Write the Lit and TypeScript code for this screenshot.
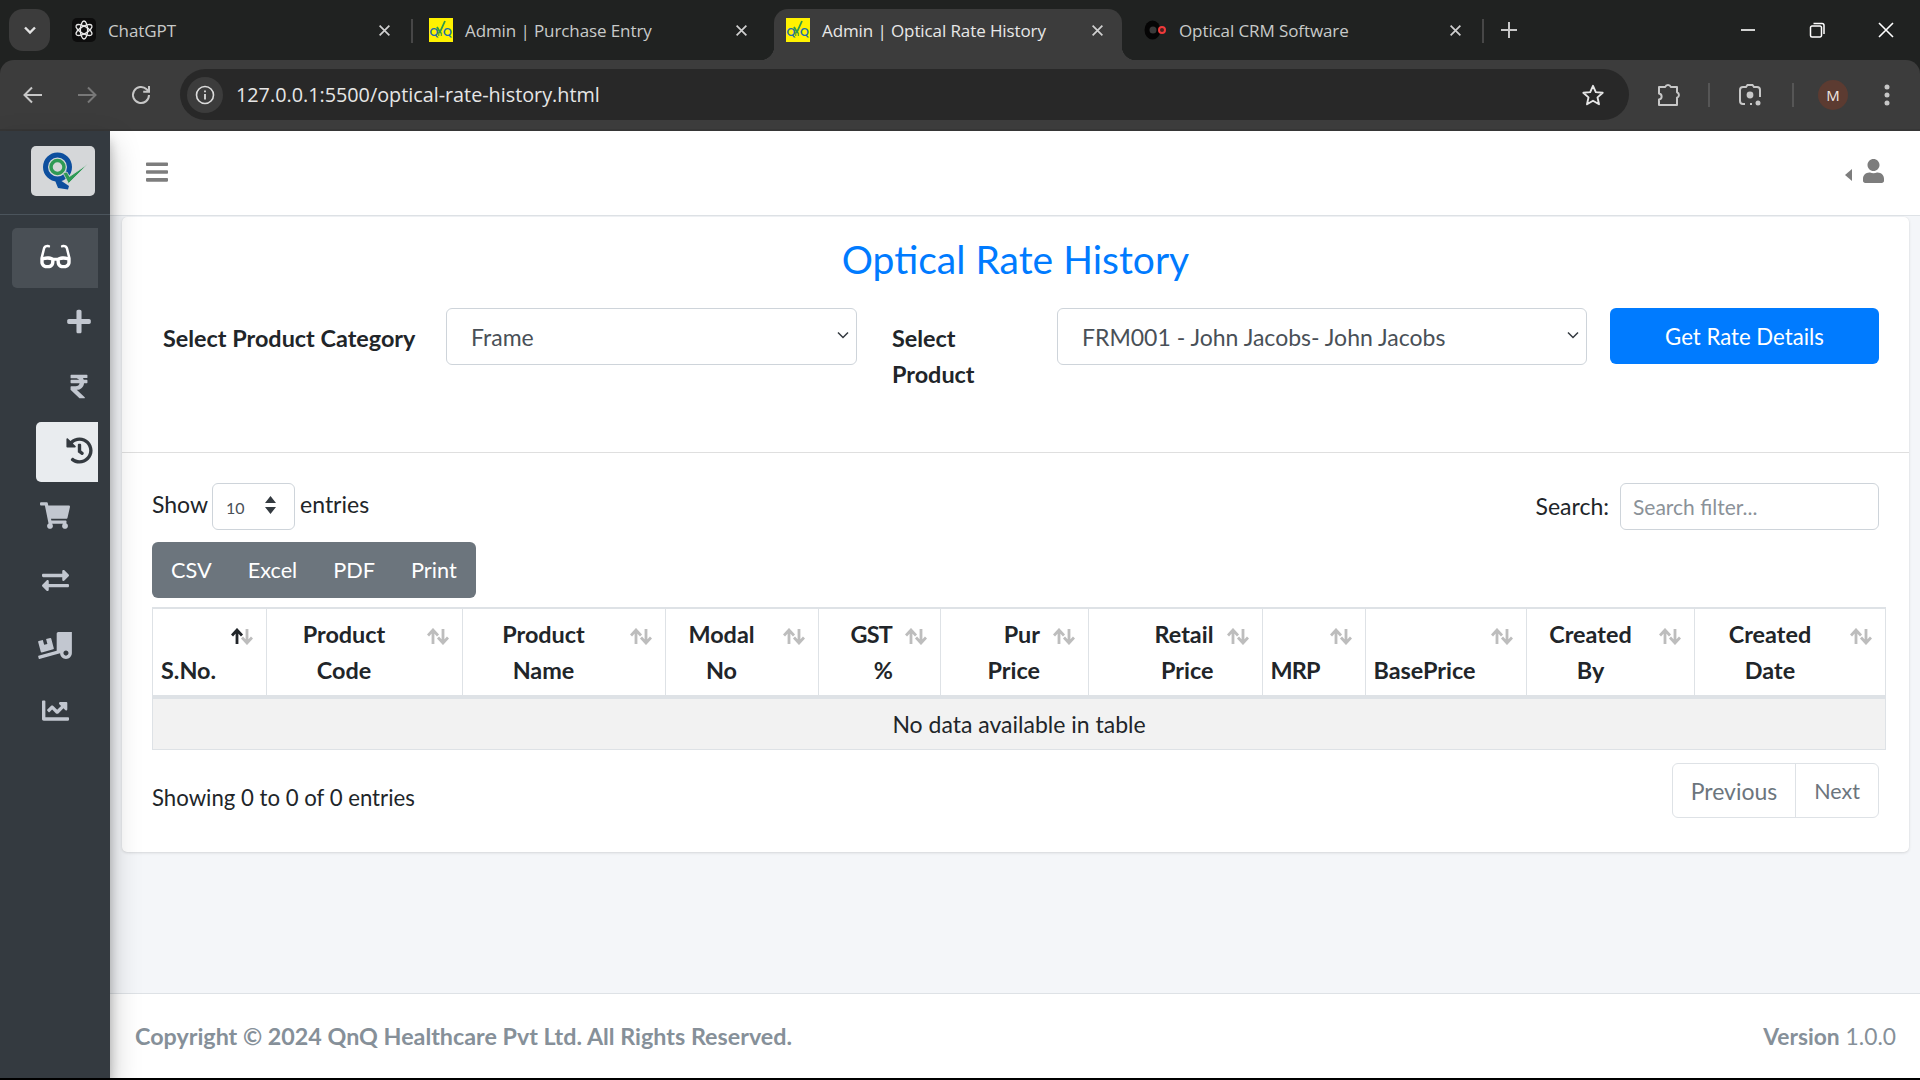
import { LitElement, html, css, svg } from "lit";
import { customElement } from "lit/decorators.js";

const ICONS = {
  bars: ["0 0 448 512", "M16 132h416c8.837 0 16-7.163 16-16V76c0-8.837-7.163-16-16-16H16C7.163 60 0 67.163 0 76v40c0 8.837 7.163 16 16 16zm0 160h416c8.837 0 16-7.163 16-16v-40c0-8.837-7.163-16-16-16H16c-8.837 0-16 7.163-16 16v40c0 8.837 7.163 16 16 16zm0 160h416c8.837 0 16-7.163 16-16v-40c0-8.837-7.163-16-16-16H16c-8.837 0-16 7.163-16 16v40c0 8.837 7.163 16 16 16z"],
  user: ["0 0 448 512", "M224 256c70.7 0 128-57.3 128-128S294.7 0 224 0 96 57.3 96 128s57.3 128 128 128zm89.6 32h-16.7c-22.2 10.2-46.9 16-72.9 16s-50.6-5.8-72.9-16h-16.7C60.2 288 0 348.2 0 422.4V464c0 26.5 21.5 48 48 48h352c26.5 0 48-21.5 48-48v-41.6c0-74.2-60.2-134.4-134.4-134.4z"],
  glasses: ["0 0 576 512", "M574.1 280.37L528.75 98.66c-5.91-23.7-21.59-44.05-43-55.81-21.44-11.73-46.97-14.11-70.19-6.33l-15.25 5.08c-8.39 2.79-12.92 11.86-10.12 20.24l5.06 15.18c2.79 8.38 11.85 12.91 20.23 10.12l13.18-4.39c10.87-3.62 23-3.57 33.16 1.73 10.29 5.37 17.57 14.56 20.37 25.82l38.46 153.82c-22.19-6.81-49.79-12.46-81.2-12.46-34.77 0-73.98 7.02-114.85 26.74h-73.18c-40.87-19.74-80.08-26.75-114.86-26.75-31.42 0-59.02 5.65-81.21 12.46l38.46-153.82c2.79-11.25 10.09-20.45 20.38-25.81 10.16-5.3 22.28-5.35 33.15-1.73l13.17 4.39c8.38 2.79 17.44-1.74 20.23-10.12l5.06-15.18c2.8-8.38-1.73-17.45-10.12-20.24l-15.25-5.08c-23.22-7.78-48.75-5.41-70.19 6.33-21.41 11.77-37.09 32.11-43 55.8L1.9 280.37A64.218 64.218 0 0 0 0 295.86v70.25C0 429.01 51.58 480 115.2 480h37.12c60.28 0 110.37-45.94 114.88-105.37l2.93-38.63h35.75l2.93 38.63C313.31 434.06 363.4 480 423.68 480h37.12c63.62 0 115.2-50.99 115.2-113.88v-70.25c0-5.23-.64-10.43-1.9-15.5zm-370.72 89.42c-1.97 25.91-24.4 46.21-51.06 46.21H115.2C86.97 416 64 393.62 64 366.11v-37.54c18.12-6.49 43.42-12.57 72.08-12.57 23.86 0 47.26 4.33 69.93 12.92l-2.63 34.85zM512 366.12c0 27.51-22.97 49.88-51.2 49.88h-37.12c-26.67 0-49.1-20.3-51.06-46.21l-3.13-41.22c22.67-8.59 46.08-12.92 69.95-12.92 28.66 0 53.95 6.08 72.07 12.57v37.9z"],
  plus: ["0 0 448 512", "M416 208H272V64c0-17.67-14.33-32-32-32h-32c-17.67 0-32 14.33-32 32v144H32c-17.67 0-32 14.33-32 32v32c0 17.67 14.33 32 32 32h144v144c0 17.67 14.33 32 32 32h32c17.67 0 32-14.33 32-32V304h144c17.67 0 32-14.33 32-32v-32c0-17.67-14.33-32-32-32z"],
  rupee: ["0 0 320 512", "M308 96c6.627 0 12-5.373 12-12V44c0-6.627-5.373-12-12-12H12C5.373 32 0 37.373 0 44v44.748c0 6.627 5.373 12 12 12h85.28c27.308 0 48.261 9.958 60.97 27.252H12c-6.627 0-12 5.373-12 12v40c0 6.627 5.373 12 12 12h158.757c-6.217 36.086-32.961 58.632-74.757 58.632H12c-6.627 0-12 5.373-12 12v53.012c0 3.349 1.4 6.546 3.861 8.818l165.052 152.356a12.001 12.001 0 0 0 8.139 3.182h82.562c10.924 0 16.166-13.408 8.139-20.818L116.871 319.906c76.499-2.34 131.144-53.395 138.318-127.906H308c6.627 0 12-5.373 12-12v-40c0-6.627-5.373-12-12-12h-58.69c-3.486-11.541-8.28-22.246-14.252-32H308z"],
  history: ["0 0 512 512", "M504 255.531c.253 136.64-111.18 248.372-247.82 248.468-59.015.042-113.223-20.53-155.822-54.911-11.077-8.94-11.905-25.541-1.839-35.607l11.267-11.267c8.609-8.609 22.353-9.551 31.891-1.984C173.062 425.135 212.781 440 256 440c101.705 0 184-82.311 184-184 0-101.705-82.311-184-184-184-48.814 0-93.149 18.969-126.068 49.932l50.754 50.754c10.08 10.08 2.941 27.314-11.313 27.314H24c-8.837 0-16-7.163-16-16V38.627c0-14.254 17.234-21.393 27.314-11.314l49.372 49.372C129.209 34.136 189.552 8 256 8c136.81 0 247.747 110.78 248 247.531zm-180.912 78.784l9.823-12.63c8.138-10.463 6.253-25.542-4.21-33.679L288 256.349V152c0-13.255-10.745-24-24-24h-16c-13.255 0-24 10.745-24 24v135.651l65.409 50.874c10.463 8.137 25.541 6.253 33.679-4.21z"],
  cart: ["0 0 576 512", "M528.12 301.319l47.273-208C578.806 78.301 567.391 64 551.99 64H159.208l-9.166-44.81C147.758 8.021 137.93 0 126.529 0H24C10.745 0 0 10.745 0 24v16c0 13.255 10.745 24 24 24h69.883l70.248 343.435C147.325 417.1 136 435.222 136 456c0 30.928 25.072 56 56 56s56-25.072 56-56c0-15.674-6.447-29.835-16.824-40h209.647C430.447 426.165 424 440.326 424 456c0 30.928 25.072 56 56 56s56-25.072 56-56c0-22.172-12.888-41.332-31.579-50.405l5.517-24.276c3.413-15.018-8.002-29.319-23.403-29.319H218.117l-6.545-32h293.145c11.206 0 20.92-7.754 23.403-18.681z"],
  exchange: ["0 0 512 512", "M0 168v-16c0-13.255 10.745-24 24-24h360V80c0-21.367 25.899-32.042 40.971-16.971l80 80c9.372 9.373 9.372 24.569 0 33.941l-80 80C409.956 271.982 384 261.456 384 240v-48H24c-13.255 0-24-10.745-24-24zm488 152H128v-48c0-21.314-25.862-32.08-40.971-16.971l-80 80c-9.372 9.373-9.372 24.569 0 33.941l80 80C102.057 463.997 128 453.437 128 432v-48h360c13.255 0 24-10.745 24-24v-16c0-13.255-10.745-24-24-24z"],
  truck: ["0 0 640 512", "M50.2 375.6c2.3 8.5 11.1 13.6 19.6 11.3l216.4-58c8.5-2.3 13.6-11.1 11.3-19.6l-49.7-185.5c-2.3-8.5-11.1-13.6-19.6-11.3L151 133.3l24.8 92.7-61.8 16.5-24.8-92.7-77.3 20.7C3.4 172.8-1.7 181.6.6 190.1l49.6 185.5zM384 0c-17.7 0-32 14.3-32 32v323.6L5.9 450c-4.3 1.2-6.8 5.6-5.6 9.8l12.6 46.3c1.2 4.3 5.6 6.8 9.8 5.6l393.7-107.4C418.8 464.1 467.6 512 528 512c61.9 0 112-50.1 112-112V0H384zm144 448c-26.5 0-48-21.5-48-48s21.5-48 48-48 48 21.5 48 48-21.5 48-48 48z"],
  chart: ["0 0 512 512", "M496 384H64V80c0-8.84-7.16-16-16-16H16C7.16 64 0 71.16 0 80v336c0 17.67 14.33 32 32 32h464c8.84 0 16-7.16 16-16v-32c0-8.84-7.16-16-16-16zM464 96H345.94c-21.38 0-32.09 25.85-16.97 40.97l32.4 32.4L288 242.75l-73.37-73.37c-12.5-12.5-32.76-12.5-45.25 0l-68.69 68.69c-6.25 6.25-6.25 16.38 0 22.63l22.62 22.62c6.25 6.25 16.38 6.25 22.63 0L192 237.25l73.37 73.37c12.5 12.5 32.76 12.5 45.25 0l96-96 32.4 32.4c15.12 15.12 40.97 4.41 40.97-16.97V112c.01-8.84-7.15-16-15.99-16z"],
} as const;

type IconName = keyof typeof ICONS;

function fa(name: IconName, cls = "") {
  const [box, d] = ICONS[name];
  return html`<svg class=${cls} viewBox=${box} fill="currentColor"><path d=${d}></path></svg>`;
}

const NAV: { icon: IconName; nested?: boolean; state?: string; cls: string }[] = [
  { icon: "glasses", state: "open", cls: "i-glasses" },
  { icon: "plus", nested: true, cls: "i-plus" },
  { icon: "rupee", nested: true, cls: "i-rupee" },
  { icon: "history", nested: true, state: "active", cls: "i-history" },
  { icon: "cart", cls: "i-cart" },
  { icon: "exchange", cls: "i-exchange" },
  { icon: "truck", cls: "i-truck" },
  { icon: "chart", cls: "i-chart" },
];

const COLS: { lines: string[]; w: number; align: string; sorted?: boolean; tight?: boolean }[] = [
  { lines: ["S.No."], w: 114.5, align: "left", sorted: true },
  { lines: ["Product", "Code"], w: 196, align: "center" },
  { lines: ["Product", "Name"], w: 203, align: "center" },
  { lines: ["Modal", "No"], w: 153, align: "center" },
  { lines: ["GST", "%"], w: 122.5, align: "right", tight: true },
  { lines: ["Pur", "Price"], w: 148, align: "right" },
  { lines: ["Retail", "Price"], w: 173.5, align: "right" },
  { lines: ["MRP"], w: 103, align: "left", tight: true },
  { lines: ["BasePrice"], w: 161.5, align: "left" },
  { lines: ["Created", "By"], w: 168, align: "center" },
  { lines: ["Created", "Date"], w: 191, align: "center" },
];

const qnqFavicon = svg`
  <rect width="24" height="24" fill="#fff200"></rect>
  <text x="0.5" y="18" font-size="11" font-weight="700" font-family="Lato, sans-serif" fill="#1f6fa8">Q</text>
  <text x="14" y="18" font-size="11" font-weight="700" font-family="Lato, sans-serif" fill="#1f6fa8">Q</text>
  <text x="8.5" y="18" font-size="8" font-weight="700" font-family="Lato, sans-serif" fill="#2f8f4a">n</text>
  <path d="M8 9l3 5 5-11" fill="none" stroke="#2f9a4a" stroke-width="1.8"></path>`;

const TABS = [
  {
    title: "ChatGPT",
    fav: svg`
      <rect width="24" height="24" rx="5" fill="#0d0d0d"></rect>
      <g fill="none" stroke="#e8e8e8" stroke-width="1.3">
        <ellipse cx="12" cy="12" rx="3.600" ry="9"></ellipse>
        <ellipse cx="12" cy="12" rx="3.600" ry="9" transform="rotate(60 12 12)"></ellipse>
        <ellipse cx="12" cy="12" rx="3.600" ry="9" transform="rotate(120 12 12)"></ellipse>
      </g>`,
  },
  { title: "Admin | Purchase Entry", fav: qnqFavicon },
  { title: "Admin | Optical Rate History", fav: qnqFavicon, active: true },
  {
    title: "Optical CRM Software",
    fav: svg`
      <ellipse cx="9.500" cy="12" rx="8" ry="9.500" fill="#050505"></ellipse>
      <ellipse cx="10" cy="12" rx="3.500" ry="3.500" fill="#3a3a3a"></ellipse>
      <circle cx="19" cy="12" r="3" fill="#4a2020" stroke="#f03a3a" stroke-width="2"></circle>`,
  },
];

const closeX = html`<svg class="tab-x" viewBox="0 0 12 12"><path d="M1.500 1.500l9 9M10.500 1.500l-9 9" stroke="currentColor" stroke-width="1.600" fill="none"></path></svg>`;

@customElement("app-root")
export class AppRoot extends LitElement {
  static styles = css`
    :host {
      display: flex;
      flex-direction: column;
      height: 1080px;
      overflow: hidden;
      font-family: Lato, sans-serif;
      font-size: 23px;
      line-height: 36px;
      color: #212529;
      background: #f4f6f9;
    }
    svg {
      display: block;
      flex: none;
    }

    /* browser chrome */
    .tabstrip {
      height: 60px;
      flex: none;
      display: flex;
      background: #202221;
      font-family: "Open Sans", sans-serif;
      font-size: 17px;
      letter-spacing: -0.1px;
      color: #c8cac9;
      padding-top: 9px;
      box-sizing: border-box;
    }
    .tab-list-btn {
      width: 41px;
      height: 42px;
      margin-left: 9px;
      margin-right: 10px;
      border-radius: 14px;
      background: #3c3c3c;
      display: flex;
      align-items: center;
      justify-content: center;
      color: #e3e3e3;
    }
    .tab-list-btn svg {
      width: 14px;
      height: 10px;
    }
    .tab {
      position: relative;
      width: 357px;
      height: 51px;
      box-sizing: border-box;
      padding: 0 26px 9px 12px;
      display: flex;
      align-items: center;
    }
    .tab.active {
      width: 348px;
      margin-right: 9px;
      background: #3c3c3c;
      border-radius: 14px 14px 0 0;
      color: #e8e8e8;
      padding-right: 18px;
    }
    .tab.active::before,
    .tab.active::after {
      content: "";
      position: absolute;
      bottom: 0;
      width: 14px;
      height: 14px;
    }
    .tab.active::before {
      left: -14px;
      background: radial-gradient(circle at 0 0, transparent 14px, #3c3c3c 14.5px);
    }
    .tab.active::after {
      right: -14px;
      background: radial-gradient(circle at 100% 0, transparent 14px, #3c3c3c 14.5px);
    }
    .tab .fav {
      width: 24px;
      height: 24px;
      margin-right: 12px;
    }
    .tab .title {
      flex: 1;
      white-space: nowrap;
      padding-top: 2px;
    }
    .tab-x {
      width: 13px;
      height: 13px;
      color: #d0d0d0;
    }
    .tab .sep {
      position: absolute;
      right: 4px;
      top: 10px;
      width: 2px;
      height: 24px;
      background: #474747;
    }
    .tab-plus {
      width: 18px;
      height: 18px;
      margin: 12px 0 0 12px;
      color: #c8c8c8;
    }
    .win {
      margin-left: auto;
      display: flex;
      color: #fff;
    }
    .win svg {
      width: 16px;
      height: 16px;
      margin: 13px 26px 0 26px;
    }
    .win svg:first-child {
      margin-right: 27px;
    }
    .win svg:last-child {
      margin-right: 26px;
      margin-left: 27px;
    }
    .toolbar {
      height: 71px;
      flex: none;
      box-sizing: border-box;
      display: flex;
      align-items: center;
      background: #3c3c3c;
      border-bottom: 2px solid #363636;
      border-radius: 14px 14px 0 0;
      color: #c7c7c7;
      position: relative;
    }
    .strip-bg {
      background: #202221;
      flex: none;
    }
    .nav-ic {
      width: 24px;
      height: 24px;
      margin-left: 21px;
    }
    .nav-ic.dim {
      margin-left: 30px;
      color: #787878;
    }
    .nav-ic.reload {
      margin-left: 30px;
    }
    .omnibox {
      width: 1449px;
      height: 51px;
      margin-left: 27px;
      display: flex;
      align-items: center;
      border-radius: 26px;
      background: #282828;
      font-family: "Open Sans", sans-serif;
      font-size: 19.8px;
      color: #e6e6e6;
    }
    .info {
      width: 36px;
      height: 36px;
      margin-left: 7px;
      margin-right: 13px;
      border-radius: 50%;
      background: #3c3c3c;
      display: flex;
      align-items: center;
      justify-content: center;
    }
    .info svg {
      width: 20px;
      height: 20px;
    }
    .url {
      flex: 1;
    }
    .star {
      width: 24px;
      height: 24px;
      margin-right: 24px;
    }
    .tb-ic {
      width: 26px;
      height: 26px;
    }
    .tb-sep {
      width: 2px;
      height: 24px;
      background: #565656;
    }
    .avatar {
      width: 30px;
      height: 30px;
      border-radius: 50%;
      background: #5c3b31;
      color: #f0e6e2;
      font: 15px "Open Sans", sans-serif;
      display: flex;
      align-items: center;
      justify-content: center;
    }
    .dots {
      width: 6px;
      height: 22px;
    }
    .tb-puzzle { margin-left: 27px; }
    .tb-sep-a { margin-left: 26px; }
    .tb-lens { margin-left: 27px; }
    .tb-sep-b { margin-left: 29px; }
    .avatar { margin-left: 24px; }
    .dots { margin-left: 36px; }

    /* page */
    .page {
      flex: 1;
      min-height: 0;
      display: flex;
    }
    .sidebar {
      width: 110px;
      flex: none;
      background: #343a40;
      box-shadow: 0 14px 28px rgba(0, 0, 0, 0.25), 0 10px 10px rgba(0, 0, 0, 0.22);
      position: relative;
      z-index: 2;
    }
    .brand {
      height: 84px;
      box-sizing: border-box;
      border-bottom: 1px solid #4b545c;
      padding: 15px 0 0 31px;
    }
    .logo {
      width: 64px;
      height: 50px;
      border-radius: 5px;
      background: #d5d7d9;
    }
    .logo svg {
      width: 64px;
      height: 50px;
    }
    .nav {
      padding: 13px 12px 0;
      display: flex;
      flex-direction: column;
      gap: 4.8px;
    }
    .nav-item {
      height: 60px;
      box-sizing: border-box;
      padding: 0 0 3px 28px;
      display: flex;
      align-items: center;
      border-radius: 5px 0 0 5px;
      color: #c2c7d0;
    }
    .nav-item.nested {
      margin-left: 24px;
    }
    .nav-item.open {
      background: #494f55;
      color: #fff;
    }
    .nav-item.active {
      background: #e9ecef;
      color: #343a40;
    }
    .nav-slot {
      width: 30px;
      display: flex;
      justify-content: center;
    }
    .i-glasses { width: 31px; height: 27px; }
    .i-plus { width: 24px; height: 27px; }
    .i-rupee { width: 18px; height: 27px; }
    .i-history { width: 27px; height: 27px; }
    .i-cart { width: 30px; height: 27px; }
    .i-exchange { width: 27px; height: 27px; }
    .i-truck { width: 34px; height: 27px; }
    .i-chart { width: 27px; height: 27px; }

    .main {
      flex: 1;
      min-width: 0;
      display: flex;
      flex-direction: column;
    }
    .topbar {
      height: 85px;
      flex: none;
      box-sizing: border-box;
      background: #fff;
      border-bottom: 1px solid #dee2e6;
      display: flex;
      align-items: center;
      padding: 0 36px 2px 36px;
      color: #7d7d7d;
    }
    .bars {
      width: 22px;
      height: 26px;
    }
    .caret {
      width: 0;
      height: 0;
      margin: 5px 11px 0 auto;
      border: 6px solid transparent;
      border-left: 0;
      border-right: 7px solid #7d7d7d;
    }
    .person {
      width: 21px;
      height: 24px;
      margin-top: -2px;
    }
    .content {
      flex: 1;
      min-height: 0;
      padding: 1px 11px 0 12px;
    }
    .card {
      height: 635px;
      background: #fff;
      border-radius: 5px;
      box-shadow: 0 0 1px rgba(0, 0, 0, 0.08), 0 1px 3px rgba(0, 0, 0, 0.12);
      display: flex;
      flex-direction: column;
    }
    .card-head {
      height: 236px;
      flex: none;
      box-sizing: border-box;
      border-bottom: 1px solid #dfdfdf;
    }
    h2 {
      margin: 0;
      height: 91px;
      font-size: 39px;
      line-height: 84px;
      font-weight: 400;
      text-align: center;
      color: #007bff;
    }
    .filters {
      display: flex;
      align-items: flex-start;
      padding-left: 41px;
    }
    .filters label {
      font-weight: 700;
      font-size: 23.4px;
      margin-top: 12px;
    }
    .lbl-cat {
      width: 283px;
    }
    .lbl-prod {
      width: 165px;
      margin-left: 35px;
    }
    .fld {
      position: relative;
      height: 57px;
    }
    .fld select {
      width: 100%;
      height: 100%;
      box-sizing: border-box;
      appearance: none;
      background: #fff;
      border: 1px solid #ced4da;
      border-radius: 6px;
      padding: 0 24px;
      font: inherit;
      color: #495057;
    }
    .fld .chev {
      position: absolute;
      right: 8px;
      top: 23px;
      width: 12px;
      height: 8px;
      color: #343a40;
    }
    .fld-cat {
      width: 411px;
    }
    .fld-prod {
      width: 530px;
    }
    .go {
      width: 269px;
      height: 56px;
      margin-left: 23px;
      border: 0;
      border-radius: 6px;
      background: #007bff;
      color: #fff;
      font: 22.2px Lato, sans-serif;
    }
    .card-body {
      flex: 1;
      padding: 30px 30px 0;
      min-width: 0;
    }
    .tools {
      display: flex;
      justify-content: space-between;
      height: 47px;
    }
    .show,
    .search {
      display: flex;
      align-items: flex-start;
    }
    .show span {
      margin-top: 3px;
    }
    .len {
      position: relative;
      width: 83px;
      height: 47px;
      margin: 0 5px 0 4px;
    }
    .len select {
      width: 100%;
      height: 100%;
      box-sizing: border-box;
      appearance: none;
      background: #fff;
      border: 1px solid #ced4da;
      border-radius: 6px;
      padding: 2px 0 0 13px;
      font: 16px Lato, sans-serif;
      color: #495057;
    }
    .len svg {
      position: absolute;
      left: 52px;
      top: 13px;
      width: 13px;
      height: 18px;
      color: #343a40;
    }
    .search span {
      margin: 5px 11px 0 0;
    }
    .search input {
      width: 259px;
      height: 47px;
      box-sizing: border-box;
      border: 1px solid #ced4da;
      border-radius: 6px;
      padding: 0 12px;
      font: 21px Lato, sans-serif;
      color: #495057;
    }
    .search input::placeholder {
      color: #8b9299;
      opacity: 1;
    }
    .exports {
      display: inline-flex;
      height: 56px;
      margin-top: 12px;
      border-radius: 6px;
      background: #6c757d;
      color: #fff;
      align-items: center;
      padding: 0 1px;
      font-size: 21.7px;
      vertical-align: top;
    }
    .exports span {
      padding: 0 18px;
    }
    table {
      display: table;
      width: 1734px;
      margin-top: 9px;
      table-layout: fixed;
      border-collapse: separate;
      border-spacing: 0;
      border-top: 2px solid #dee2e6;
    }
    th {
      position: relative;
      height: 86px;
      box-sizing: content-box;
      padding: 0 48px 0 8px;
      vertical-align: bottom;
      font-size: 23.4px;
      font-weight: 700;
      border-right: 1px solid #dee2e6;
      border-bottom: 4px solid #dee2e6;
    }
    th.tight {
      letter-spacing: -0.8px;
    }
    th:first-child,
    td {
      border-left: 1px solid #dee2e6;
    }
    th .head {
      padding-bottom: 7px;
    }
    th .head div {
      white-space: nowrap;
    }
    th .sort {
      position: absolute;
      right: 13px;
      top: 19px;
      width: 22px;
      height: 17px;
    }
    .al-left { text-align: left; }
    .al-center { text-align: center; }
    .al-right { text-align: right; }
    td {
      height: 50px;
      box-sizing: content-box;
      padding: 0;
      background: #f2f2f2;
      text-align: center;
      border-right: 1px solid #dee2e6;
      border-bottom: 1px solid #dee2e6;
    }
    .table-foot {
      display: flex;
      justify-content: space-between;
      margin-top: 13px;
    }
    .table-foot .info-text {
      margin-top: 17px;
      font-size: 22.2px;
    }
    .pager {
      display: flex;
      height: 55px;
      box-sizing: border-box;
      border: 1px solid #dee2e6;
      border-radius: 6px;
      color: #6c757d;
      align-items: center;
    }
    .pager span {
      padding: 0 18px;
    }
    .pager span + span {
      align-self: stretch;
      display: flex;
      align-items: center;
      border-left: 1px solid #dee2e6;
      font-size: 21.5px;
    }
    .foot {
      height: 85px;
      flex: none;
      box-sizing: border-box;
      background: #fff;
      border-top: 1px solid #dee2e6;
      display: flex;
      justify-content: space-between;
      align-items: center;
      padding: 0 24px 0 25px;
      color: #869099;
      font-size: 23.3px;
    }
    .foot b {
      font-weight: 700;
    }
    .foot .ver {
      font-size: 22.8px;
    }
    .edge {
      height: 2px;
      flex: none;
      background: #000;
    }
  `;

  private renderTabs() {
    return TABS.map(
      (t, i) => html`
        <div class="tab ${t.active ? "active" : ""}">
          <svg class="fav" viewBox="0 0 24 24">${t.fav}</svg>
          <span class="title">${t.title}</span>
          ${closeX}
          ${i === 0 || i === 3 ? html`<i class="sep"></i>` : ""}
        </div>
      `
    );
  }

  private renderChrome() {
    return html`
      <div class="tabstrip">
        <div class="tab-list-btn">
          <svg viewBox="0 0 14 10"><path d="M2 2.500l5 5 5-5" fill="none" stroke="currentColor" stroke-width="2.400"></path></svg>
        </div>
        ${this.renderTabs()}
        <svg class="tab-plus" viewBox="0 0 18 18"><path d="M9 1v16M1 9h16" stroke="currentColor" stroke-width="2" fill="none"></path></svg>
        <div class="win">
          <svg viewBox="0 0 16 16"><path d="M1 8h14" stroke="currentColor" stroke-width="1.600"></path></svg>
          <svg viewBox="0 0 16 16"><path d="M1.500 5.500a1.500 1.500 0 0 1 1.500-1.500h8a1.500 1.500 0 0 1 1.500 1.500v8a1.500 1.500 0 0 1-1.500 1.500H3a1.500 1.500 0 0 1-1.500-1.500zM4.500 1.500h8.500a2 2 0 0 1 2 2v8.500" fill="none" stroke="currentColor" stroke-width="1.500"></path></svg>
          <svg viewBox="0 0 16 16"><path d="M1 1l14 14M15 1L1 15" stroke="currentColor" stroke-width="1.600"></path></svg>
        </div>
      </div>
      <div class="strip-bg">
        <div class="toolbar">
          <svg class="nav-ic" viewBox="0 0 24 24"><path d="M21 12H4M11 4.500L3.500 12l7.500 7.500" fill="none" stroke="currentColor" stroke-width="2"></path></svg>
          <svg class="nav-ic dim" viewBox="0 0 24 24"><path d="M3 12h17M13 4.500l7.500 7.500-7.500 7.500" fill="none" stroke="currentColor" stroke-width="2"></path></svg>
          <svg class="nav-ic reload" viewBox="0 0 24 24"><path d="M20 12a8 8 0 1 1-2.400-5.700L20 8.500M20 3v5.800h-5.800" fill="none" stroke="currentColor" stroke-width="2"></path></svg>
          <div class="omnibox">
            <div class="info">
              <svg viewBox="0 0 20 20"><circle cx="10" cy="10" r="8.500" fill="none" stroke="#dcdcdc" stroke-width="1.600"></circle><path d="M10 9v5.500M10 5.500v1.800" stroke="#dcdcdc" stroke-width="1.800"></path></svg>
            </div>
            <span class="url">127.0.0.1:5500/optical-rate-history.html</span>
            <svg class="star" viewBox="0 0 24 24"><path d="M12 2.800l2.800 6.300 6.900.7-5.200 4.600 1.500 6.800-6-3.500-6 3.500 1.500-6.800-5.200-4.600 6.900-.7z" fill="none" stroke="currentColor" stroke-width="1.900" stroke-linejoin="round"></path></svg>
          </div>
          <svg class="tb-ic tb-puzzle" viewBox="0 0 26 26"><path d="M3 5h6.200a3 3 0 0 1 5.600 0H21v5.200a3 3 0 0 1 0 5.600V23H3v-5.500c3.500-.5 3.500-5.500 0-6z" fill="none" stroke="currentColor" stroke-width="2" stroke-linejoin="round"></path></svg>
          <i class="tb-sep tb-sep-a"></i>
          <svg class="tb-ic tb-lens" viewBox="0 0 26 26"><path d="M8 22H6a3 3 0 0 1-3-3V8a3 3 0 0 1 3-3h3l1.500-2h5L17 5h3a3 3 0 0 1 3 3v7M3 13v2M13 22h2" fill="none" stroke="currentColor" stroke-width="2"></path><circle cx="13" cy="13" r="3.400" fill="currentColor"></circle><circle cx="21" cy="21" r="2.500" fill="currentColor"></circle></svg>
          <i class="tb-sep tb-sep-b"></i>
          <div class="avatar">M</div>
          <svg class="dots" viewBox="0 0 6 22"><circle cx="3" cy="3" r="2.500" fill="currentColor"></circle><circle cx="3" cy="11" r="2.500" fill="currentColor"></circle><circle cx="3" cy="19" r="2.500" fill="currentColor"></circle></svg>
        </div>
      </div>
    `;
  }

  private renderSidebar() {
    return html`
      <aside class="sidebar">
        <div class="brand">
          <div class="logo">
            <svg viewBox="0 0 64 50">
              <circle cx="26.500" cy="21" r="12" fill="none" stroke="#0d4f9e" stroke-width="5"></circle>
              <path d="M23 32l6 2 9 6-1 3.500-10-1.500z" fill="#0d4f9e"></path>
              <circle cx="26.500" cy="21" r="6.500" fill="none" stroke="#2f9a55" stroke-width="3.500"></circle>
              <path d="M32 27l5.500 10.500L57 18 38.500 30.500 36 26z" fill="#2f9a55" stroke="#d5d7d9" stroke-width="0.800"></path>
            </svg>
          </div>
        </div>
        <nav class="nav">
          ${NAV.map(
            (n) => html`
              <div class="nav-item ${n.nested ? "nested" : ""} ${n.state ?? ""}">
                <span class="nav-slot">${fa(n.icon, n.cls)}</span>
              </div>
            `
          )}
        </nav>
      </aside>
    `;
  }

  private renderTable() {
    return html`
      <table>
        <colgroup>
          ${COLS.map((c) => html`<col style="width:${c.w}px" />`)}
        </colgroup>
        <thead>
          <tr>
            ${COLS.map(
              (c) => html`
                <th class="al-${c.align} ${c.tight ? "tight" : ""}">
                  <div class="head">${c.lines.map((l) => html`<div>${l}</div>`)}</div>
                  <svg class="sort" viewBox="0 0 22 17">
                    <path d="M6 16V2M1 7.500L6 2l5 5.500" fill="none" stroke=${c.sorted ? "#212529" : "#bdbdbd"} stroke-width="2.800"></path>
                    <path d="M16 1v14M11 9.500l5 5.500 5-5.500" fill="none" stroke="#bdbdbd" stroke-width="2.800"></path>
                  </svg>
                </th>
              `
            )}
          </tr>
        </thead>
        <tbody>
          <tr><td colspan=${COLS.length}>No data available in table</td></tr>
        </tbody>
      </table>
    `;
  }

  render() {
    const chev = html`<svg class="chev" viewBox="0 0 12 8"><path d="M1 1.500l5 5 5-5" fill="none" stroke="currentColor" stroke-width="1.500"></path></svg>`;
    return html`
      ${this.renderChrome()}
      <div class="page">
        ${this.renderSidebar()}
        <div class="main">
          <header class="topbar">
            ${fa("bars", "bars")}
            <i class="caret"></i>
            ${fa("user", "person")}
          </header>
          <main class="content">
            <section class="card">
              <div class="card-head">
                <h2>Optical Rate History</h2>
                <div class="filters">
                  <label class="lbl-cat">Select Product Category</label>
                  <div class="fld fld-cat">
                    <select><option>Frame</option></select>
                    ${chev}
                  </div>
                  <label class="lbl-prod">Select<br />Product</label>
                  <div class="fld fld-prod">
                    <select><option>FRM001 - John Jacobs- John Jacobs</option></select>
                    ${chev}
                  </div>
                  <button class="go">Get Rate Details</button>
                </div>
              </div>
              <div class="card-body">
                <div class="tools">
                  <div class="show">
                    <span>Show</span>
                    <div class="len">
                      <select><option>10</option></select>
                      <svg viewBox="0 0 13 18"><path d="M6.500 0l5.500 7H1zM6.500 18L1 11h11z" fill="currentColor"></path></svg>
                    </div>
                    <span>entries</span>
                  </div>
                  <div class="search">
                    <span>Search:</span>
                    <input placeholder="Search filter..." />
                  </div>
                </div>
                <div class="exports">
                  <span>CSV</span><span>Excel</span><span>PDF</span><span>Print</span>
                </div>
                ${this.renderTable()}
                <div class="table-foot">
                  <div class="info-text">Showing 0 to 0 of 0 entries</div>
                  <div class="pager"><span>Previous</span><span>Next</span></div>
                </div>
              </div>
            </section>
          </main>
          <footer class="foot">
            <b>Copyright © 2024 QnQ Healthcare Pvt Ltd. All Rights Reserved.</b>
            <span class="ver"><b>Version</b> 1.0.0</span>
          </footer>
        </div>
      </div>
      <div class="edge"></div>
    `;
  }
}

declare global {
  interface HTMLElementTagNameMap {
    "app-root": AppRoot;
  }
}
